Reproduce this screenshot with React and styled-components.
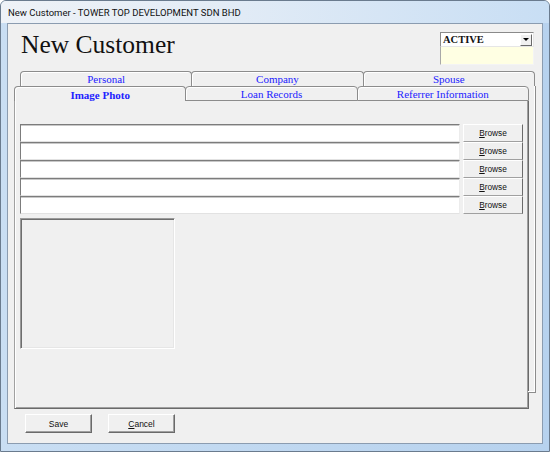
import React from 'react'
import styled, { createGlobalStyle } from 'styled-components'

const GlobalStyle = createGlobalStyle`
  html, body {
    margin: 0;
    padding: 0;
    background: #ffffff;
  }
  * {
    box-sizing: border-box;
  }
`;

const Window = styled.div`
  width: 550px;
  height: 452px;
  display: flex;
  flex-direction: column;
  border: 1px solid #6a7b8e;
  border-radius: 6px 6px 0 0;
  background: linear-gradient(to right, #c9def3, #b7d2ee);
  overflow: hidden;
`;

const TitleBar = styled.div`
  height: 22px;
  flex: none;
  display: flex;
  align-items: center;
  padding-left: 7px;
  background: linear-gradient(to right, #eef2f7 0%, #e3ecf6 40%, #c8def4 100%);
  font-family: Roboto, "Liberation Sans", sans-serif;
  font-size: 9.5px;
  color: #111;
`;

const Frame = styled.div`
  flex: 1;
  display: flex;
  padding: 0 6px 7px 6px;
`;

const Client = styled.div`
  flex: 1;
  display: flex;
  flex-direction: column;
  border: 1px solid #8b9cb0;
  background: #f0f0f0;
`;

const Header = styled.div`
  height: 47px;
  flex: none;
  display: flex;
  justify-content: space-between;
  padding: 0 8px 0 13px;
`;

const Heading = styled.h1`
  margin: 8px 0 0 0;
  font-family: "Liberation Serif", "Times New Roman", serif;
  font-weight: normal;
  font-size: 25.5px;
  line-height: 26px;
  color: #111;
`;

const StatusBox = styled.div`
  width: 94px;
  margin-top: 8px;
  display: flex;
  flex-direction: column;
`;

const Select = styled.div`
  height: 15px;
  display: flex;
  align-items: center;
  justify-content: space-between;
  padding: 0 1px 0 2px;
  background: #ffffff;
  border: 1px solid;
  border-color: #8a8a8a #e6e6e6 #e6e6e6 #8a8a8a;
  font-family: "Liberation Serif", "Times New Roman", serif;
  font-weight: bold;
  font-size: 10.5px;
  color: #111;
`;

const ArrowButton = styled.span`
  width: 12px;
  height: 12px;
  display: flex;
  align-items: center;
  justify-content: center;
  background: #f0f0f0;
  border: 1px solid;
  border-color: #ffffff #6a6a6a #6a6a6a #ffffff;

  &::after {
    content: '';
    border-left: 3px solid transparent;
    border-right: 3px solid transparent;
    border-top: 3px solid #000;
  }
`;

const Note = styled.div`
  height: 18px;
  background: #ffffe3;
  border: 1px solid;
  border-color: #a8a8a8 #f4f4f4 #f4f4f4 #a8a8a8;
  border-top: none;
`;

const TabArea = styled.div`
  margin-left: 6px;
  width: 522px;
  display: flex;
  flex-direction: column;
`;

const TabRow = styled.div`
  display: flex;
  width: 515px;
  height: 15px;
  margin-left: ${({ back }) => (back ? '6px' : '0')};
`;

const Tab = styled.div`
  flex: 1;
  height: 15px;
  margin-left: -1px;
  &:first-child {
    margin-left: 0;
  }
  display: flex;
  justify-content: center;
  align-items: center;
  background: #f0f0f0;
  border: 1px solid #8c8c8c;
  border-bottom: ${({ active }) => (active ? 'none' : '1px solid #8c8c8c')};
  border-radius: 4px 4px 0 0;
  box-shadow: inset 1px 1px 0 #ffffff;
  font-family: "Liberation Serif", "Times New Roman", serif;
  font-size: 11px;
  font-weight: ${({ active }) => (active ? 'bold' : 'normal')};
  line-height: 12px;
  padding-top: 1px;
  color: #2222ff;
  position: relative;
  z-index: ${({ active }) => (active ? 1 : 0)};
`;

const BackTab = styled(Tab)`
  border-bottom: none;
  height: 16px;
  margin-bottom: -1px;
  padding-top: 1px;
  align-items: flex-start;
`;

const Deck = styled.div`
  position: relative;
  width: 515px;

  &::after {
    content: '';
    position: absolute;
    top: 0;
    right: -7px;
    bottom: 16px;
    width: 7px;
    border-right: 1px solid #8c8c8c;
    border-bottom: 1px solid #8c8c8c;
    box-shadow: inset -1px -1px 0 #ffffff;
  }
`;

const Panel = styled.div`
  height: 308px;
  padding: 23px 0 0 5px;
  border-left: 1px solid #a0a0a0;
  border-right: 1px solid #6a6a6a;
  border-bottom: 1px solid #6a6a6a;
  box-shadow: inset 1px 0 0 #ffffff, inset -1px -1px 0 #a0a0a0;
`;

const FileGrid = styled.div`
  display: grid;
  grid-template-columns: 440px 60px;
  grid-auto-rows: 18px;
  column-gap: 3px;
`;

const PathBox = styled.div`
  background: #ffffff;
  border: 1px solid;
  border-color: #7c7c7c #ececec #e2e2e2 #7c7c7c;
  box-shadow: inset 0 1px 0 #c8c8c8;
`;

const SmallButton = styled.button`
  margin: 0;
  padding: 0;
  display: flex;
  align-items: center;
  justify-content: center;
  background: #f0f0f0;
  border: 1px solid;
  border-color: #ffffff #6a6a6a #a0a0a0 #ffffff;
  font-family: "Liberation Sans", Arial, sans-serif;
  font-size: ${({ size }) => size || '8.3px'};
  color: #111;

  u {
    text-decoration: underline;
  }
`;

const PhotoBox = styled.div`
  margin-top: 4px;
  width: 155px;
  height: 131px;
  border: 1px solid;
  border-color: #9a9a9a #ffffff #ffffff #9a9a9a;
  box-shadow: inset 1px 1px 0 #6e6e6e, inset -1px -1px 0 #e6e6e6;
`;

const Footer = styled.div`
  display: flex;
  gap: 16px;
  padding: 5px 0 0 17px;
`;

const DialogButton = styled(SmallButton)`
  width: 67px;
  height: 19px;
  border-color: #ffffff #6a6a6a #6a6a6a #ffffff;
  box-shadow: inset -1px -1px 0 #a0a0a0;
`;

const backTabs = ['Personal', 'Company', 'Spouse']
const frontTabs = ['Image Photo', 'Loan Records', 'Referrer Information']

const App = () => {
  const rows = [0, 1, 2, 3, 4]

  return (
    <>
      <GlobalStyle />
      <Window>
        <TitleBar>New Customer - TOWER TOP DEVELOPMENT SDN BHD</TitleBar>
        <Frame>
          <Client>
            <Header>
              <Heading>New Customer</Heading>
              <StatusBox>
                <Select>
                  ACTIVE
                  <ArrowButton />
                </Select>
                <Note />
              </StatusBox>
            </Header>

            <TabArea>
              <TabRow back>
                {backTabs.map((t) => (
                  <BackTab key={t}>{t}</BackTab>
                ))}
              </TabRow>
              <Deck>
                <TabRow>
                  {frontTabs.map((t, i) => (
                    <Tab key={t} active={i === 0}>{t}</Tab>
                  ))}
                </TabRow>
                <Panel>
                  <FileGrid>
                    {rows.map((r) => (
                      <React.Fragment key={r}>
                        <PathBox />
                        <SmallButton><span><u>B</u>rowse</span></SmallButton>
                      </React.Fragment>
                    ))}
                  </FileGrid>
                  <PhotoBox />
                </Panel>
              </Deck>
            </TabArea>

            <Footer>
              <DialogButton size="8.5px">Save</DialogButton>
              <DialogButton size="8.5px"><span><u>C</u>ancel</span></DialogButton>
            </Footer>
          </Client>
        </Frame>
      </Window>
    </>
  )
}

export default App
